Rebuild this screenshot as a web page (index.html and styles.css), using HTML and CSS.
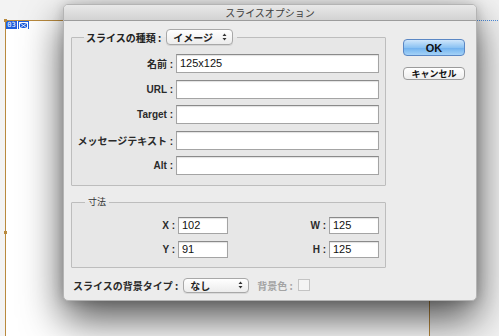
FILE: index.html
```html
<!DOCTYPE html>
<html lang="ja">
<head>
    <meta charset="UTF-8">
    <title>スライスオプション</title>
    <link rel="stylesheet" href="styles.css">
</head>
<body>

    <div class="canvas">
        <div class="slice">
            <div class="slice-tag">
                <span class="slice-num">03</span>
                <span class="slice-icon">
                    <svg width="9" height="7" viewBox="0 0 9 7">
                        <rect x="0.5" y="0.5" width="8" height="6" fill="none" stroke="#fff" stroke-width="1"/>
                        <path d="M1 1 L8 6 M8 1 L1 6" stroke="#fff" stroke-width="0.8"/>
                    </svg>
                </span>
            </div>
        </div>
        <div class="handle handle-tl"></div>
        <div class="handle handle-ml"></div>
        <div class="auto-slice"></div>

        <div class="dialog">
            <div class="titlebar">スライスオプション</div>
            <div class="dialog-body">
                <div class="main-col">
                    <fieldset class="group group-slice">
                        <legend class="legend-bold">
                            <span>スライスの種類 :</span>
                            <span class="popup popup-type">
                                <span>イメージ</span>
                                <svg class="arrows" width="5" height="8" viewBox="0 0 5 8">
                                    <path d="M0.5 3 L2.5 0.5 L4.5 3 Z M0.5 5 L2.5 7.5 L4.5 5 Z" fill="#333"/>
                                </svg>
                            </span>
                        </legend>
                        <label class="lbl">名前 :</label>
                        <div class="field wide">125x125</div>
                        <label class="lbl">URL :</label>
                        <div class="field wide"></div>
                        <label class="lbl">Target :</label>
                        <div class="field wide"></div>
                        <label class="lbl">メッセージテキスト :</label>
                        <div class="field wide"></div>
                        <label class="lbl">Alt :</label>
                        <div class="field wide"></div>
                    </fieldset>

                    <fieldset class="group group-size">
                        <legend class="legend-plain">寸法</legend>
                        <label class="lbl">X :</label>
                        <div class="field small">102</div>
                        <label class="lbl">W :</label>
                        <div class="field small">125</div>
                        <label class="lbl">Y :</label>
                        <div class="field small">91</div>
                        <label class="lbl">H :</label>
                        <div class="field small">125</div>
                    </fieldset>

                    <div class="bg-row">
                        <span class="lbl">スライスの背景タイプ :</span>
                        <span class="popup popup-bg">
                            <span>なし</span>
                            <svg class="arrows" width="5" height="8" viewBox="0 0 5 8">
                                <path d="M0.5 3 L2.5 0.5 L4.5 3 Z M0.5 5 L2.5 7.5 L4.5 5 Z" fill="#333"/>
                            </svg>
                        </span>
                        <span class="lbl-disabled">背景色 :</span>
                        <span class="swatch"></span>
                    </div>
                </div>

                <div class="button-col">
                    <button class="btn btn-ok">OK</button>
                    <button class="btn btn-cancel">キャンセル</button>
                </div>
            </div>
        </div>
    </div>

</body>
</html>
```

FILE: styles.css
```css
* {
    margin: 0;
    padding: 0;
    box-sizing: border-box;
}

body {
    background: #f3f3f3;
    font-family: "Liberation Sans", "Noto Sans CJK JP", sans-serif;
    overflow: hidden;
}

.canvas {
    position: relative;
    width: 499px;
    height: 336px;
    overflow: hidden;
}

/* slice on the canvas */
.slice {
    position: absolute;
    left: 5px;
    top: 20px;
    width: 425px;
    height: 400px;
    background: #fff;
    border: 1px solid #b98a3e;
}

.slice-tag {
    display: flex;
    gap: 1px;
}

.slice-num,
.slice-icon {
    background: #1f5fdc;
    color: #fff;
    width: 11px;
    height: 8px;
    font-family: "DejaVu Sans Mono", monospace;
    font-size: 7px;
    line-height: 8px;
    display: flex;
    align-items: center;
    justify-content: center;
}

.handle {
    position: absolute;
    width: 3px;
    height: 3px;
    background: #b98a3e;
}

.handle-tl {
    left: 4px;
    top: 19px;
}

.handle-ml {
    left: 4px;
    top: 231px;
}

.auto-slice {
    position: absolute;
    left: 430px;
    top: 20px;
    width: 80px;
    border-top: 1px dotted #4f8fe0;
}

/* dialog window */
.dialog {
    position: absolute;
    left: 63px;
    top: 4px;
    width: 414px;
    height: 297px;
    background: #ececec;
    border-radius: 5px;
    border: 1px solid #b4b4b4;
    box-shadow: 0 18px 40px rgba(0, 0, 0, 0.68), 0 0 12px rgba(0, 0, 0, 0.18);
}

.titlebar {
    height: 16px;
    border-radius: 4px 4px 0 0;
    background: linear-gradient(#e9e9e9, #d2d2d2);
    border-bottom: 1px solid #9c9c9c;
    text-align: center;
    font-family: "Noto Sans CJK JP", sans-serif;
    font-size: 10px;
    line-height: 15px;
    color: #3e3e3e;
}

.dialog-body {
    display: flex;
    gap: 17px;
    padding: 8px 0 0 7px;
}

.main-col {
    width: 315px;
}

.group {
    border: 1px solid #bdbdbd;
    background: #e7e7e7;
    border-radius: 1px;
}

.group-slice {
    display: grid;
    grid-template-columns: 104px 203px;
    grid-auto-rows: 19px;
    row-gap: 6.5px;
    padding: 9px 0 10px 0;
}

.legend-bold {
    margin-left: 12px;
    padding: 0 4px 0 2px;
    display: flex;
    align-items: center;
    gap: 5px;
    font-family: "Noto Sans CJK JP", sans-serif;
    font-weight: bold;
    font-size: 10px;
    color: #222;
}

.legend-plain {
    margin-left: 13px;
    padding: 0 3px;
    font-family: "Noto Sans CJK JP", sans-serif;
    font-size: 9px;
    line-height: 12px;
    color: #333;
}

.lbl {
    font-family: "Liberation Sans", "Noto Sans CJK JP", sans-serif;
    font-weight: bold;
    font-size: 10px;
    color: #2a2a2a;
    text-align: right;
    padding-right: 3px;
    align-self: center;
    white-space: nowrap;
}

.field {
    background: #fff;
    border: 1px solid #a4a4a4;
    border-top-color: #8a8a8a;
    box-shadow: inset 0 1px 1px rgba(0, 0, 0, 0.12);
    font-size: 11px;
    line-height: 16px;
    padding-left: 3px;
    color: #111;
}

.group-size {
    margin-top: 10px;
    display: grid;
    grid-template-columns: 106px 50px 101px 50px;
    grid-auto-rows: 17px;
    row-gap: 7px;
    padding: 9px 0 9px 0;
}

.group-size .field {
    line-height: 14px;
}

.popup {
    display: flex;
    align-items: center;
    justify-content: space-between;
    background: linear-gradient(#ffffff, #ececec);
    border: 1px solid #a8a8a8;
    border-radius: 4px;
    box-shadow: 0 1px 0 rgba(0, 0, 0, 0.08);
    font-family: "Noto Sans CJK JP", sans-serif;
    font-weight: bold;
    font-size: 10px;
    color: #222;
    padding: 0 5px 0 6px;
}

.popup-type {
    width: 67px;
    height: 16px;
}

.popup-bg {
    width: 66px;
    height: 15px;
}

.bg-row {
    display: flex;
    align-items: center;
    margin-top: 9px;
    height: 16px;
}

.bg-row .lbl {
    font-family: "Noto Sans CJK JP", sans-serif;
    padding-left: 2px;
    padding-right: 5px;
}

.lbl-disabled {
    font-family: "Noto Sans CJK JP", sans-serif;
    font-size: 10px;
    font-weight: bold;
    color: #a4a4a4;
    margin-left: 8px;
    margin-right: 5px;
}

.swatch {
    width: 12px;
    height: 12px;
    border: 1px solid #c4c4c4;
    background: #f4f4f4;
}

.button-col {
    display: flex;
    flex-direction: column;
    gap: 11px;
    padding-top: 10px;
}

.btn {
    width: 62px;
    border-radius: 4px;
    font-family: "Noto Sans CJK JP", sans-serif;
    color: #111;
    cursor: pointer;
}

.btn-ok {
    height: 17px;
    font-family: "Liberation Sans", sans-serif;
    font-weight: bold;
    font-size: 11px;
    background: linear-gradient(#cfe6fb, #8cc3f3 50%, #6eb0ee 51%, #a4d2f7);
    border: 1px solid #5a87c4;
}

.btn-cancel {
    height: 13px;
    font-size: 9px;
    font-weight: bold;
    line-height: 11px;
    background: linear-gradient(#ffffff, #eeeeee);
    border: 1px solid #9b9b9b;
}
```
